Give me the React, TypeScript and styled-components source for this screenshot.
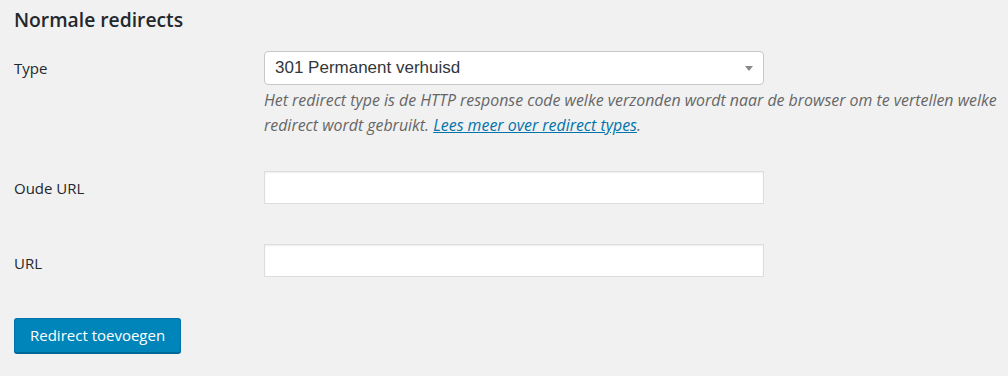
import React from "react";
import styled, { createGlobalStyle } from "styled-components";

const GlobalStyle = createGlobalStyle`
  html, body {
    margin: 0;
    padding: 0;
    background: #f1f1f1;
  }
  body {
    font-family: "Open Sans", "Noto Sans", sans-serif;
    color: #23282d;
  }
`;

const Page = styled.div`
  padding: 4px 14px 20px;
`;

const Title = styled.h2`
  font-size: 19.3px;
  font-weight: 600;
  margin: 0 0 15px;
  line-height: 32px;
  color: #23282d;
`;

const FormTable = styled.div`
  display: grid;
  grid-template-columns: 250px 500px;
`;

const Row = styled.div`
  display: contents;
`;

const Label = styled.label<{ top: number }>`
  font-size: 15px;
  line-height: 20px;
  padding-top: ${(p) => p.top}px;
  color: #23282d;
`;

const Field = styled.div<{ bottom: number }>`
  padding-bottom: ${(p) => p.bottom}px;
`;

const SelectBox = styled.div`
  position: relative;
  height: 34px;
  box-sizing: border-box;
  border: 1px solid #c8c8c8;
  border-radius: 4px;
  background: #fff;
  display: flex;
  align-items: center;
  padding: 0 10px;
  font-family: "Liberation Sans", Arial, sans-serif;
  font-size: 17px;
  color: #32373c;
`;

const Arrow = styled.span`
  position: absolute;
  right: 10px;
  top: 14px;
  width: 0;
  height: 0;
  border-left: 4px solid transparent;
  border-right: 4px solid transparent;
  border-top: 5px solid #888;
`;

const Description = styled.p`
  margin: 3px 0 0;
  font-size: 15.9px;
  line-height: 25px;
  font-style: italic;
  color: #666;
  width: 740px;

  a {
    color: #0073aa;
    text-decoration: underline;
  }
`;

const TextInput = styled.input`
  display: block;
  width: 500px;
  height: 33px;
  box-sizing: border-box;
  border: 1px solid #ddd;
  background: #fff;
  box-shadow: inset 0 1px 2px rgba(0, 0, 0, 0.07);
  padding: 3px 8px;
  font-size: 15px;
  outline: none;
`;

const Button = styled.button`
  height: 35px;
  padding: 0 15px 2px;
  background: #0085ba;
  border: 1px solid #0073aa;
  border-bottom-color: #006799;
  border-radius: 3px;
  box-shadow: 0 1px 0 #006799;
  color: #fff;
  font-family: "Open Sans", "Noto Sans", sans-serif;
  font-size: 15px;
  cursor: pointer;
`;

export default function App() {
  return (
    <>
      <GlobalStyle />
      <Page>
        <Title>Normale redirects</Title>
        <FormTable>
          <Row>
            <Label top={7}>Type</Label>
            <Field bottom={33}>
              <SelectBox>
                301 Permanent verhuisd
                <Arrow />
              </SelectBox>
              <Description>
                Het redirect type is de HTTP response code welke verzonden wordt naar de browser om te vertellen welke
                redirect wordt gebruikt. <a href="#">Lees meer over redirect types</a>.
              </Description>
            </Field>
          </Row>
          <Row>
            <Label top={7}>Oude URL</Label>
            <Field bottom={40}>
              <TextInput type="text" />
            </Field>
          </Row>
          <Row>
            <Label top={9}>URL</Label>
            <Field bottom={41}>
              <TextInput type="text" />
            </Field>
          </Row>
        </FormTable>
        <Button>Redirect toevoegen</Button>
      </Page>
    </>
  );
}
